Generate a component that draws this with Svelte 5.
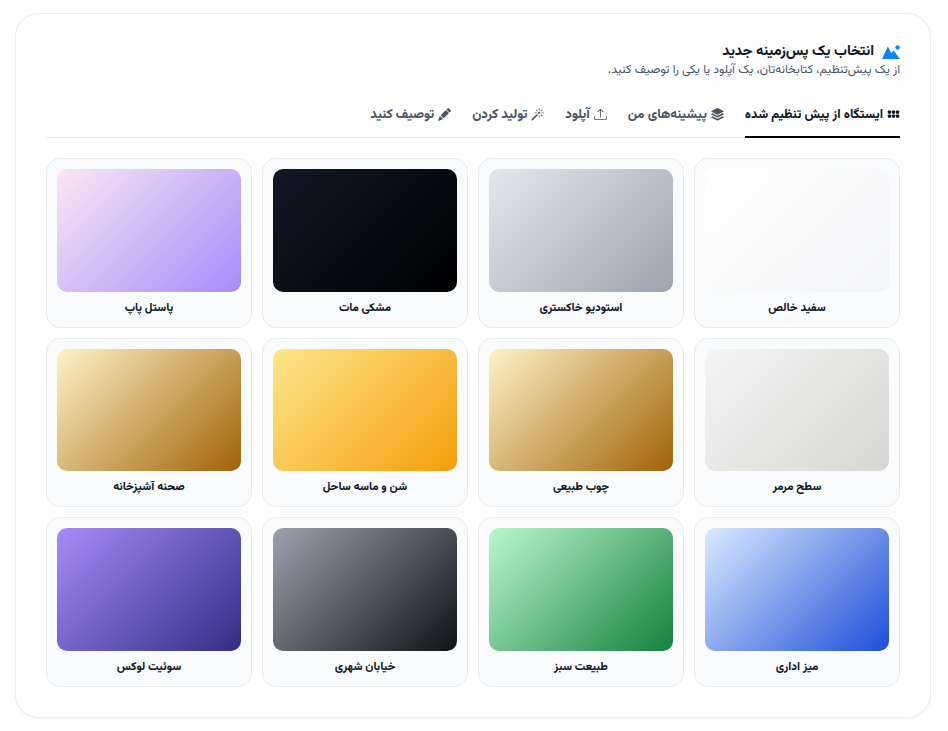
<script>
    const tabs = [
        { id: "presets", label: "ایستگاه از پیش تنظیم شده" },
        { id: "library", label: "پیشینه‌های من" },
        { id: "upload", label: "آپلود" },
        { id: "generate", label: "تولید کردن" },
        { id: "describe", label: "توصیف کنید" },
    ];

    const presets = [
        { name: "سفید خالص", bg: "linear-gradient(135deg, #ffffff, #f3f4f6)" },
        { name: "استودیو خاکستری", bg: "linear-gradient(135deg, #e5e7eb, #9ca3af)" },
        { name: "مشکی مات", bg: "linear-gradient(135deg, #111827, #000000)" },
        { name: "پاستل پاپ", bg: "linear-gradient(135deg, #fbe7f3, #a78bfa)" },
        { name: "سطح مرمر", bg: "linear-gradient(135deg, #f5f5f5, #d6d6d4)" },
        { name: "چوب طبیعی", bg: "linear-gradient(135deg, #fef3c7, #a16207)" },
        { name: "شن و ماسه ساحل", bg: "linear-gradient(135deg, #fde68a, #f59e0b)" },
        { name: "صحنه آشپزخانه", bg: "linear-gradient(135deg, #fef3c7, #a16207)" },
        { name: "میز اداری", bg: "linear-gradient(135deg, #dbeafe, #1d4ed8)" },
        { name: "طبیعت سبز", bg: "linear-gradient(135deg, #bbf7d0, #15803d)" },
        { name: "خیابان شهری", bg: "linear-gradient(135deg, #9ca3af, #0f1115)" },
        { name: "سوئیت لوکس", bg: "linear-gradient(135deg, #a78bfa, #312e81)" },
    ];
</script>

<div class="page" dir="rtl">
    <section class="panel">
        <header class="head">
            <h2>
                <svg class="mountain" viewBox="0 0 18 14" aria-hidden="true">
                    <circle cx="15.6" cy="2.4" r="2.2" />
                    <path d="M0 14 L5.8 1.6 L9.4 8 L11.6 5.4 L18 14 Z" />
                </svg>
                انتخاب یک پس‌زمینه جدید
            </h2>
            <p>از یک پیش‌تنظیم، کتابخانه‌تان، یک آپلود یا یکی را توصیف کنید.</p>
        </header>

        <nav class="tabs">
            {#each tabs as tab, i}
                <button class="tab" class:active={i === 0}>
                    <svg class="icon" viewBox="0 0 16 16" aria-hidden="true">
                        {#if tab.id === "presets"}
                            {#each [1, 6, 11] as x}
                                {#each [3, 8] as y}
                                    <rect {x} {y} width="4" height="4" rx="1" />
                                {/each}
                            {/each}
                        {:else if tab.id === "library"}
                            <path d="m14.12 10.163 1.715.858c.22.11.22.424 0 .534L8.267 15.34a.598.598 0 0 1-.534 0L.165 11.555a.299.299 0 0 1 0-.534l1.716-.858 5.317 2.659c.505.252 1.1.252 1.604 0l5.317-2.66z" />
                            <path d="m14.12 6.576 1.715.858c.22.11.22.424 0 .534l-7.568 3.784a.598.598 0 0 1-.534 0L.165 7.968a.299.299 0 0 1 0-.534l1.716-.858 5.317 2.659c.505.252 1.1.252 1.604 0l5.317-2.659z" />
                            <path d="M7.733.063a.598.598 0 0 1 .534 0l7.568 3.784a.3.3 0 0 1 0 .535L8.267 8.165a.598.598 0 0 1-.534 0L.165 4.382a.299.299 0 0 1 0-.535L7.733.063z" />
                        {:else if tab.id === "upload"}
                            <path d="M.5 9.9a.5.5 0 0 1 .5.5v2.5a1 1 0 0 0 1 1h12a1 1 0 0 0 1-1v-2.5a.5.5 0 0 1 1 0v2.5a2 2 0 0 1-2 2H2a2 2 0 0 1-2-2v-2.5a.5.5 0 0 1 .5-.5z" />
                            <path d="M7.646 1.146a.5.5 0 0 1 .708 0l3 3a.5.5 0 0 1-.708.708L8.5 2.707V11.5a.5.5 0 0 1-1 0V2.707L5.354 4.854a.5.5 0 1 1-.708-.708l3-3z" />
                        {:else if tab.id === "generate"}
                            <path d="M9.5 2.672a.5.5 0 1 0 1 0V.843a.5.5 0 0 0-1 0v1.829Zm4.5.035A.5.5 0 0 0 13.293 2L12 3.293a.5.5 0 1 0 .707.707L14 2.707ZM7.293 4A.5.5 0 1 0 8 3.293L6.707 2A.5.5 0 0 0 6 2.707L7.293 4Zm-.621 2.5a.5.5 0 1 0 0-1H4.843a.5.5 0 1 0 0 1h1.829Zm8.485 0a.5.5 0 1 0 0-1h-1.829a.5.5 0 0 0 0 1h1.829ZM13.293 10A.5.5 0 1 0 14 9.293L12.707 8a.5.5 0 1 0-.707.707L13.293 10ZM9.5 11.157a.5.5 0 0 0 1 0V9.328a.5.5 0 0 0-1 0v1.829Zm1.854-5.097a.5.5 0 0 0 0-.706l-.708-.708a.5.5 0 0 0-.707 0L8.646 5.94a.5.5 0 0 0 0 .707l.708.708a.5.5 0 0 0 .707 0l1.293-1.293Zm-3 3a.5.5 0 0 0 0-.706l-.708-.708a.5.5 0 0 0-.707 0L.646 13.94a.5.5 0 0 0 0 .707l.708.708a.5.5 0 0 0 .707 0L8.354 9.06Z" />
                        {:else}
                            <path d="M12.854.146a.5.5 0 0 0-.707 0L10.5 1.793 14.207 5.5l1.647-1.646a.5.5 0 0 0 0-.708l-3-3zm.646 6.061L9.793 2.5 3.293 9H3.5a.5.5 0 0 1 .5.5v.5h.5a.5.5 0 0 1 .5.5v.5h.5a.5.5 0 0 1 .5.5v.5h.5a.5.5 0 0 1 .5.5v.207l6.5-6.5zm-7.468 7.468A.5.5 0 0 1 6 13.5V13h-.5a.5.5 0 0 1-.5-.5V12h-.5a.5.5 0 0 1-.5-.5V11h-.5a.5.5 0 0 1-.5-.5V10h-.5a.499.499 0 0 1-.175-.032l-.179.178a.5.5 0 0 0-.11.168l-2 5a.5.5 0 0 0 .65.65l5-2a.5.5 0 0 0 .168-.11l.178-.178z" />
                        {/if}
                    </svg>
                    <span>{tab.label}</span>
                </button>
            {/each}
        </nav>

        <div class="grid">
            {#each presets as preset}
                <button class="preset">
                    <div class="thumb" style="background: {preset.bg}"></div>
                    <span class="name">{preset.name}</span>
                </button>
            {/each}
        </div>
    </section>
</div>

<style>
    :global(body) {
        background: #ffffff;
    }

    .page {
        padding: 13px 17px 13px 15px;
        font-family: "Vazirmatn", sans-serif;
    }

    .panel {
        height: 705px;
        box-sizing: border-box;
        padding: 30px;
        background: #ffffff;
        border: 1px solid #e9ecef;
        border-radius: 24px;
        box-shadow: 0 1px 3px rgba(0, 0, 0, 0.05);
    }

    .head h2 {
        display: flex;
        align-items: center;
        gap: 8px;
        margin: 0;
        font-size: 14.4px;
        line-height: 16px;
        font-weight: 800;
        color: #111827;
    }

    .head p {
        margin: 2px 0 0;
        font-size: 12.1px;
        line-height: 16px;
        color: #4b5563;
    }

    .mountain {
        width: 18px;
        height: 14px;
        fill: #0a84ff;
    }

    .tabs {
        display: flex;
        gap: 21px;
        margin-top: 14px;
        border-bottom: 1px solid #e5e7eb;
    }

    .tab {
        display: flex;
        align-items: center;
        gap: 4px;
        height: 46px;
        padding: 0;
        margin-bottom: -1px;
        background: none;
        border: none;
        border-bottom: 2px solid transparent;
        font: inherit;
        font-size: 13.1px;
        font-weight: 800;
        color: #4b5563;
    }

    .tab span {
        padding-top: 2px;
    }

    .tab.active {
        font-size: 12.7px;
        color: #111827;
        border-bottom-color: #000000;
    }

    .icon {
        width: 13px;
        height: 13px;
        fill: currentColor;
    }

    .grid {
        display: grid;
        grid-template-columns: repeat(4, 1fr);
        gap: 10px;
        margin-top: 20px;
    }

    .preset {
        display: flex;
        flex-direction: column;
        padding: 10px;
        background: #fafbfd;
        border: 1px solid #e9ecef;
        border-radius: 14px;
        font: inherit;
    }

    .thumb {
        width: 100%;
        aspect-ratio: 3 / 2;
        border-radius: 10px;
    }

    .name {
        width: 100%;
        margin-top: 8px;
        text-align: center;
        font-size: 11.5px;
        line-height: 17px;
        font-weight: 800;
        color: #111827;
    }
</style>
